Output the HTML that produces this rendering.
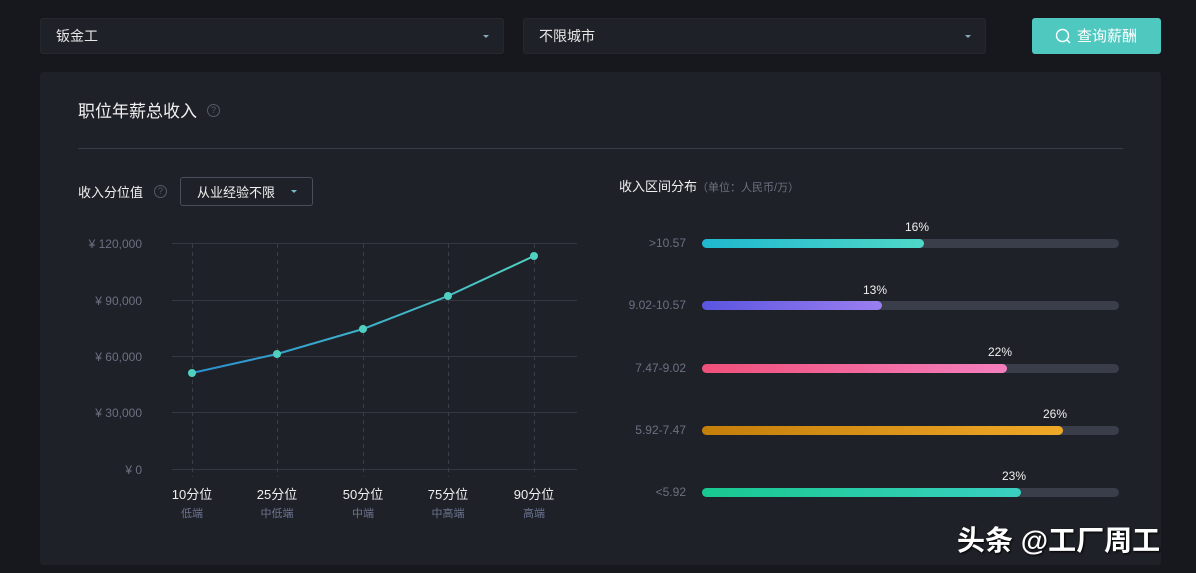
<!DOCTYPE html>
<html><head><meta charset="utf-8"><style>
*{margin:0;padding:0;box-sizing:border-box}
body{width:1196px;height:573px;background:#17181d;font-family:"Liberation Sans","Noto Sans CJK SC",sans-serif;position:relative;overflow:hidden;color:#fff}
.a{position:absolute}
.sel{background:#1f2128;border:1px solid #262830;border-radius:3px;height:36px;top:18px;font-size:14px;color:#e6e6e6;padding:7px 15px}
.tri{position:absolute;right:14px;top:16px;width:0;height:0;border-left:3px solid transparent;border-right:3px solid transparent;border-top:3px solid #8ab}
.q{position:absolute;width:13px;height:13px;border:1px solid #555a66;border-radius:50%;font-size:9px;color:#555a66;text-align:center;line-height:11px}
.lbl{position:absolute;right:510px;font-size:12px;color:#6c7080;text-align:right}
.track{position:absolute;left:702px;width:417px;height:9px;border-radius:5px;background:#3a3e4a}
.fill{position:absolute;left:0;top:0;height:9px;border-radius:5px}
.pct{position:absolute;font-size:12px;color:#f0f0f0}
</style></head><body>
<div class="a sel" style="left:40px;width:464px">钣金工<span class="tri"></span></div>
<div class="a sel" style="left:523px;width:463px">不限城市<span class="tri"></span></div>
<div class="a" style="left:1032px;top:18px;width:129px;height:36px;background:#4fc8c0;border-radius:3px;font-size:15px;color:#fff;padding:7px 0 0 45px">查询薪酬
<svg class="a" style="left:23px;top:10px" width="17" height="17" viewBox="0 0 17 17"><circle cx="7.5" cy="7.5" r="6" fill="none" stroke="#fff" stroke-width="1.4"/><path d="M12 12l3 3" stroke="#fff" stroke-width="1.4"/></svg></div>
<div class="a" style="left:40px;top:72px;width:1121px;height:493px;background:#1f2128;border-radius:3px"></div>
<div class="a" style="left:78px;top:97px;font-size:17px;color:#f0f0f0">职位年薪总收入</div>
<div class="q" style="left:207px;top:104px">?</div>
<div class="a" style="left:78px;top:148px;width:1045px;height:1px;background:#3a3d46"></div>
<div class="a" style="left:78px;top:182px;font-size:13px;color:#f0f0f0">收入分位值</div>
<div class="q" style="left:154px;top:185px">?</div>
<div class="a" style="left:180px;top:177px;width:133px;height:29px;border:1px solid #4a4e5a;border-radius:3px;font-size:13px;color:#f0f0f0;padding:4px 0 0 16px">从业经验不限<span class="tri" style="right:15px;top:12px;border-top-color:#7bc"></span></div>
<svg class="a" style="left:0;top:0" width="600" height="573">
<g stroke="#353841" stroke-width="1"><line x1="172" y1="243.5" x2="577" y2="243.5"/><line x1="172" y1="300.5" x2="577" y2="300.5"/><line x1="172" y1="356.5" x2="577" y2="356.5"/><line x1="172" y1="412.5" x2="577" y2="412.5"/><line x1="172" y1="469.5" x2="577" y2="469.5"/></g>
<g stroke="#3a3d47" stroke-dasharray="4 4"><line x1="192.5" y1="244" x2="192.5" y2="477"/><line x1="277.5" y1="244" x2="277.5" y2="477"/><line x1="363.5" y1="244" x2="363.5" y2="477"/><line x1="448.5" y1="244" x2="448.5" y2="477"/><line x1="534.5" y1="244" x2="534.5" y2="477"/></g>
<defs><linearGradient id="lg" x1="0" x2="1"><stop offset="0" stop-color="#2a8fd0"/><stop offset="1" stop-color="#4fd0c0"/></linearGradient></defs>
<polyline points="192,373 277,354 363,329 448,296 534,256" fill="none" stroke="url(#lg)" stroke-width="2"/>
<g fill="#4fd0c0"><circle cx="192" cy="373" r="4"/><circle cx="277" cy="354" r="4"/><circle cx="363" cy="329" r="4"/><circle cx="448" cy="296" r="4"/><circle cx="534" cy="256" r="4"/></g>
<g font-size="12" fill="#6c7080" text-anchor="end" font-family="Liberation Sans,sans-serif"><text x="142" y="248">¥ 120,000</text><text x="142" y="305">¥ 90,000</text><text x="142" y="361">¥ 60,000</text><text x="142" y="417">¥ 30,000</text><text x="142" y="474">¥ 0</text></g>
<g font-size="13" fill="#f0f0f0" text-anchor="middle" font-family="Liberation Sans,Noto Sans CJK SC,sans-serif"><text x="192" y="499">10分位</text><text x="277" y="499">25分位</text><text x="363" y="499">50分位</text><text x="448" y="499">75分位</text><text x="534" y="499">90分位</text></g>
<g font-size="11" fill="#6c7590" text-anchor="middle" font-family="Liberation Sans,Noto Sans CJK SC,sans-serif"><text x="192" y="517">低端</text><text x="277" y="517">中低端</text><text x="363" y="517">中端</text><text x="448" y="517">中高端</text><text x="534" y="517">高端</text></g>
</svg>
<div class="a" style="left:619px;top:176px;font-size:13px;color:#f0f0f0">收入区间分布<span style="font-size:11px;color:#6c7080">（单位：人民币/万）</span></div>
<div class="lbl" style="top:236px">&gt;10.57</div>
<div class="lbl" style="top:298px">9.02-10.57</div>
<div class="lbl" style="top:361px">7.47-9.02</div>
<div class="lbl" style="top:423px">5.92-7.47</div>
<div class="lbl" style="top:485px">&lt;5.92</div>
<div class="track" style="top:239px"><div class="fill" style="width:222px;background:linear-gradient(90deg,#1fb8cf,#4fd8c8)"></div></div>
<div class="track" style="top:301px"><div class="fill" style="width:180px;background:linear-gradient(90deg,#5a55e0,#9b7ff0)"></div></div>
<div class="track" style="top:364px"><div class="fill" style="width:305px;background:linear-gradient(90deg,#f0507a,#f47fbe)"></div></div>
<div class="track" style="top:426px"><div class="fill" style="width:361px;background:linear-gradient(90deg,#c47e0a,#f0a828)"></div></div>
<div class="track" style="top:488px"><div class="fill" style="width:319px;background:linear-gradient(90deg,#18c890,#3ad0c0)"></div></div>
<div class="pct" style="left:905px;top:220px">16%</div>
<div class="pct" style="left:863px;top:283px">13%</div>
<div class="pct" style="left:988px;top:345px">22%</div>
<div class="pct" style="left:1043px;top:407px">26%</div>
<div class="pct" style="left:1002px;top:469px">23%</div>
<div class="a" style="left:957px;top:519px;font-size:28px;font-weight:bold;color:#fff;text-shadow:1px 1px 2px #000;white-space:nowrap">头条 @工厂周工</div>
</body></html>
